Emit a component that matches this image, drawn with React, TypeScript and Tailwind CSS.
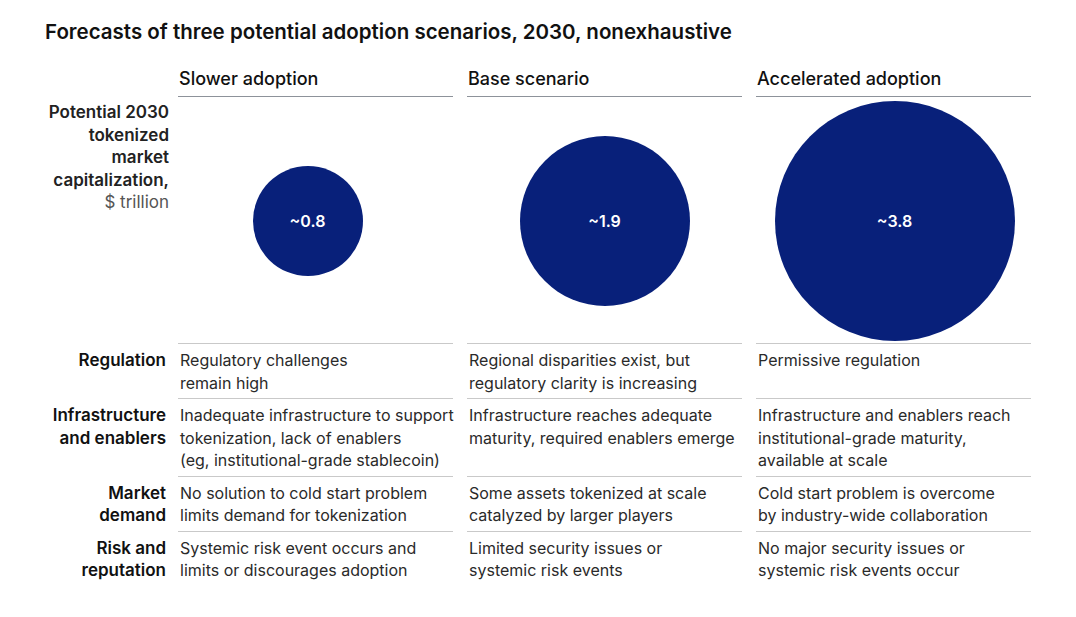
const scenarios = [
  { title: "Slower adoption", value: "~0.8", size: "w-[110px] h-[110px] mr-[16px]" },
  { title: "Base scenario", value: "~1.9", size: "w-[170px] h-[170px]" },
  { title: "Accelerated adoption", value: "~3.8", size: "w-[240px] h-[240px] ml-[2px]" },
];

const rows: { label: string[]; cells: string[][] }[] = [
  {
    label: ["Regulation"],
    cells: [
      ["Regulatory challenges", "remain high"],
      ["Regional disparities exist, but", "regulatory clarity is increasing"],
      ["Permissive regulation"],
    ],
  },
  {
    label: ["Infrastructure", "and enablers"],
    cells: [
      [
        "Inadequate infrastructure to support",
        "tokenization, lack of enablers",
        "(eg, institutional-grade stablecoin)",
      ],
      ["Infrastructure reaches adequate", "maturity, required enablers emerge"],
      [
        "Infrastructure and enablers reach",
        "institutional-grade maturity,",
        "available at scale",
      ],
    ],
  },
  {
    label: ["Market", "demand"],
    cells: [
      ["No solution to cold start problem", "limits demand for tokenization"],
      ["Some assets tokenized at scale", "catalyzed by larger players"],
      ["Cold start problem is overcome", "by industry-wide collaboration"],
    ],
  },
  {
    label: ["Risk and", "reputation"],
    cells: [
      ["Systemic risk event occurs and", "limits or discourages adoption"],
      ["Limited security issues or", "systemic risk events"],
      ["No major security issues or", "systemic risk events occur"],
    ],
  },
];

export default function App() {
  return (
    <div className="w-[1076px] h-[617px] bg-white text-[#222] font-['Inter',sans-serif] overflow-hidden">
      <h1 className="pl-[45px] pt-[20px] text-[20.5px] leading-[24px] font-semibold text-[#111]">
        Forecasts of three potential adoption scenarios, 2030, nonexhaustive
      </h1>

      <div className="grid grid-cols-[164px_275px_275px_275px] gap-x-[14px] mt-[23px]">
        {/* header row */}
        <div />
        {scenarios.map((s) => (
          <div
            key={s.title}
            className="border-b border-[#8d929a] pb-[5px] pl-[1px] text-[18px] leading-[24px] font-medium text-[#111]"
          >
            {s.title}
          </div>
        ))}

        {/* bubble row */}
        <div className="-mr-[5px] pt-[4px] text-right text-[17px] leading-[22.5px] font-semibold text-[#222]">
          <div>Potential 2030</div>
          <div>tokenized</div>
          <div>market</div>
          <div>capitalization,</div>
          <div className="font-normal text-[#555]">$ trillion</div>
        </div>
        {scenarios.map((s) => (
          <div key={s.value} className="h-[246px] flex items-center justify-center pt-[1px]">
            <div
              className={`${s.size} rounded-full bg-[#08207a] flex items-center justify-center text-white text-[16px] font-semibold`}
            >
              {s.value}
            </div>
          </div>
        ))}

        {/* criteria rows */}
        {rows.map((r) => (
          <div key={r.label.join(" ")} className="contents">
            <div className="-mr-[2px] pt-[6px] pb-[4px] text-right text-[17px] leading-[22.5px] font-semibold text-[#111]">
              {r.label.map((l) => (
                <div key={l}>{l}</div>
              ))}
            </div>
            {r.cells.map((c, i) => (
              <div
                key={i}
                className="border-t border-[#c9c9c9] pt-[5px] pb-[4px] pl-[2px] text-[16px] leading-[22.5px] text-[#2a2a2a]"
              >
                {c.map((l) => (
                  <div key={l} className="whitespace-nowrap">
                    {l}
                  </div>
                ))}
              </div>
            ))}
          </div>
        ))}
      </div>
    </div>
  );
}
